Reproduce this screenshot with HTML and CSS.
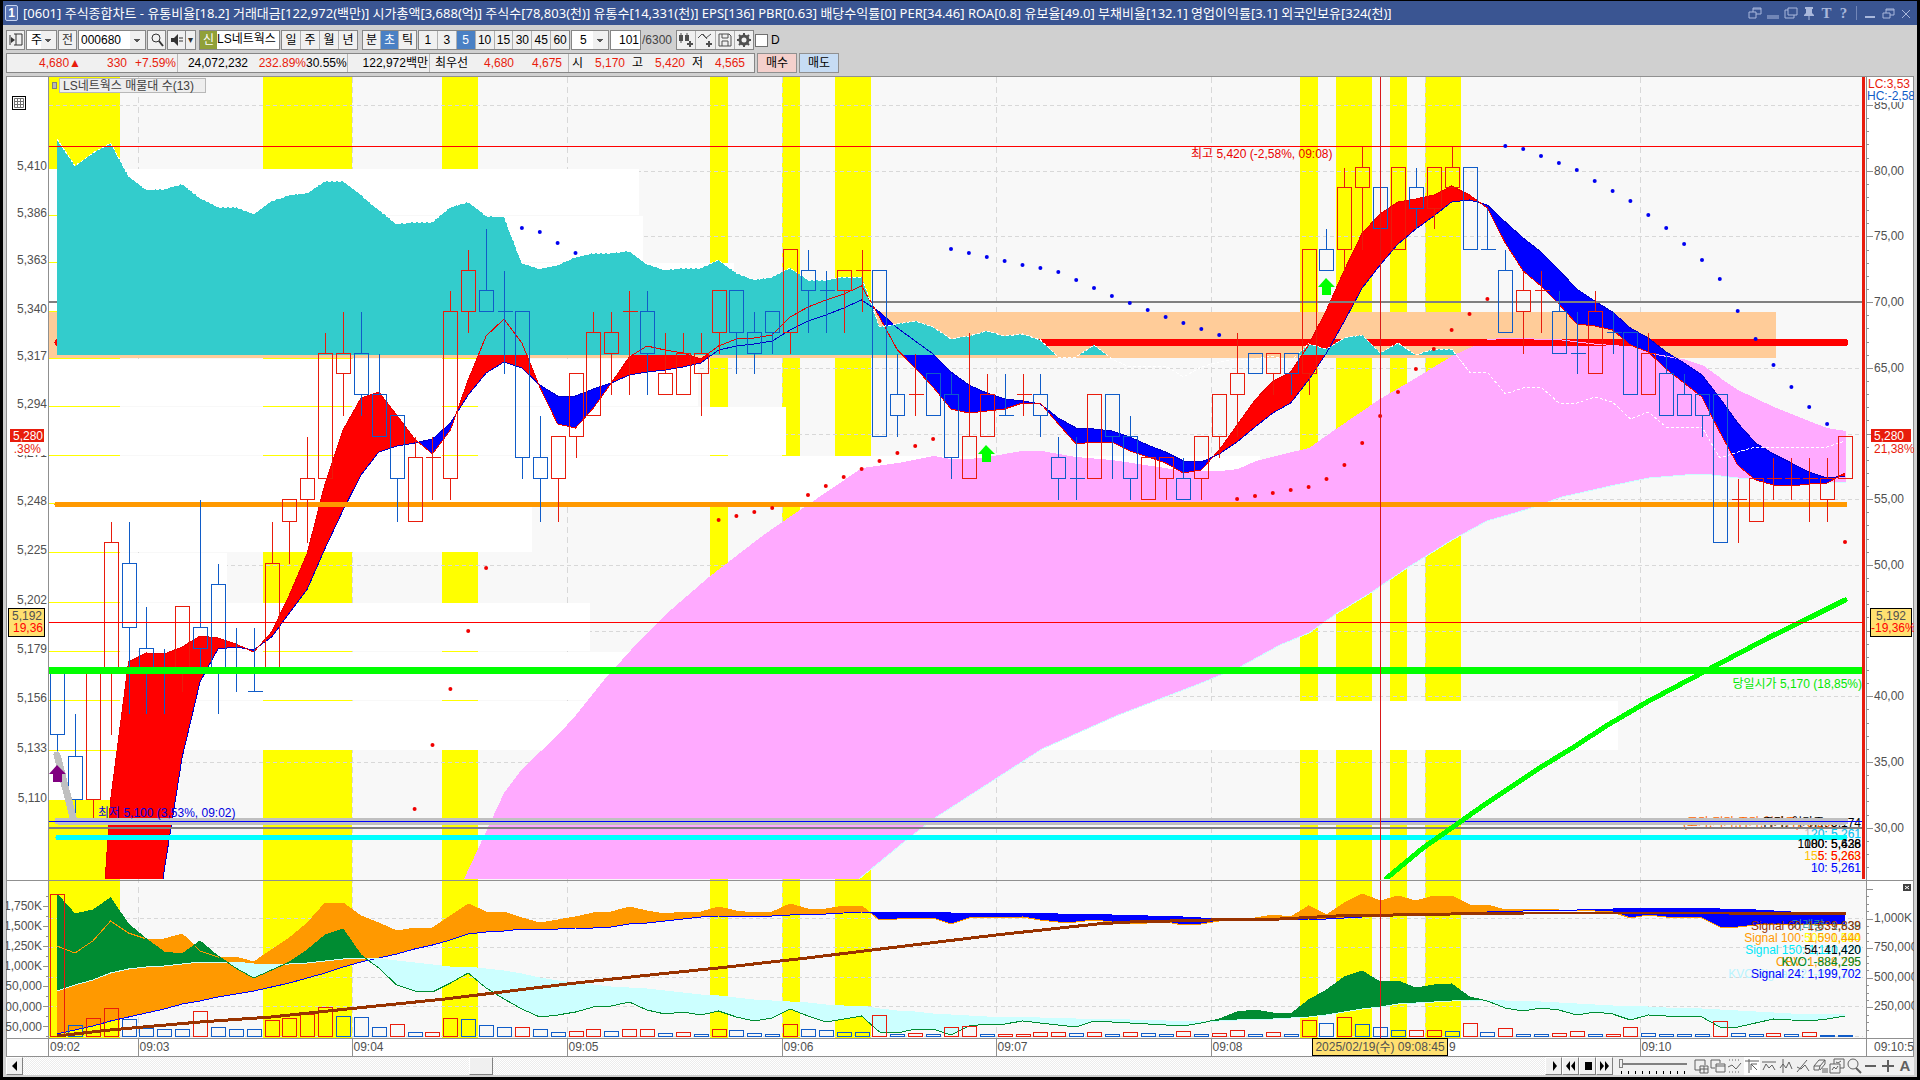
FILE: index.html
```html
<!DOCTYPE html>
<html lang="ko">
<head>
  <meta charset="UTF-8">
  <meta name="viewport" content="width=device-width, initial-scale=1.0">
  <title>[0601] 주식종합차트</title>
  <link rel="stylesheet" href="styles.css">
</head>
<body>

  <!-- Title bar -->
  <header class="titlebar">
    <span class="badge">1</span>
    <h1>[0601] 주식종합차트 - 유통비율[18.2] 거래대금[122,972(백만)] 시가총액[3,688(억)] 주식수[78,803(천)] 유통수[14,331(천)] EPS[136] PBR[0.63] 배당수익률[0] PER[34.46] ROA[0.8] 유보율[49.0] 부채비율[132.1] 영업이익률[3.1] 외국인보유[324(천)]</h1>
    <div class="win-buttons">
      <button aria-label="링크"><svg viewBox="0 0 16 16"><path d="M2 7h7v6H2zM6 7V3h8v6H9M6 4h8"/></svg></button>
      <button aria-label="내리기"><svg viewBox="0 0 16 16"><path d="M2 11h12M2 13h12"/></svg></button>
      <button aria-label="복사"><svg viewBox="0 0 16 16"><path d="M5 3h9v7H5zM5 5H2v8h9v-3"/></svg></button>
      <button aria-label="고정"><svg viewBox="0 0 16 16"><path class="solid" d="M4 2h8v2h-1v4l2 2v1H3v-1l2-2V4H4z"/><path d="M8 11v4"/></svg></button>
      <button class="t">T</button>
      <button class="t">?</button>
      <i class="split"></i>
      <button aria-label="최소화"><svg viewBox="0 0 16 16"><path d="M3 12h10" stroke-width="2"/></svg></button>
      <button aria-label="이전 크기"><svg viewBox="0 0 16 16"><path d="M3 8h7v5H3zM6 8V4h8v6h-4M6 5h8"/></svg></button>
      <button aria-label="닫기"><svg viewBox="0 0 16 16"><path d="M4 5l8 8M12 5l-8 8"/></svg></button>
    </div>
  </header>

  <div class="window">

    <!-- Toolbar -->
    <div class="toolbar">
      <button class="cell" aria-label="패널 열기"><svg viewBox="0 0 16 16"><path d="M6 2h8v11H6M8 2v11M2 3v10"/><path class="solid" d="M7 8L3 5v6z"/></svg></button>
      <select class="kind" aria-label="종목 구분"><option>주</option></select>
      <button class="cell">전</button>
      <select class="code" aria-label="종목코드"><option>000680</option></select>
      <button class="cell" aria-label="검색"><svg viewBox="0 0 16 16"><circle cx="7" cy="6" r="4"/><path d="M10 9l4 5" stroke-width="2"/></svg></button>
      <button class="cell" aria-label="소리"><svg viewBox="0 0 16 16"><path class="solid" d="M2 6h3l4-4v12L5 10H2z"/><path d="M11 5v6M13 5v6" stroke-dasharray="2 1"/></svg></button>
      <button class="cell drop" aria-label="소리 메뉴">▾</button>
      <span class="name"><b>신</b><span>LS네트웍스</span></span>
      <span class="group period"><button>일</button><button>주</button><button>월</button><button>년</button></span>
      <span class="group intraday"><button>분</button><button class="on">초</button><button>틱</button></span>
      <span class="group interval"><button>1</button><button>3</button><button class="on">5</button><button>10</button><button>15</button><button>30</button><button>45</button><button>60</button></span>
      <select class="unit" aria-label="주기"><option>5</option></select>
      <input class="count" type="text" value="101" aria-label="봉 개수">
      <span class="total">/6300</span>
      <span class="group icons">
        <button aria-label="지표 추가"><svg viewBox="0 0 16 16"><path class="solid" d="M1 3h4v6H1zM7 3h4v6H7z"/><path d="M3 1v10M9 1v8"/><path d="M9 12h6M12 9v6" stroke-width="2"/></svg></button>
        <button aria-label="비교 추가"><svg viewBox="0 0 16 16"><path d="M1 6l4-4 4 4 5-4M6 2l4 5"/><path d="M9 12h6M12 9v6" stroke-width="2"/></svg></button>
        <button aria-label="저장"><svg viewBox="0 0 16 16"><path d="M2 2h10l2 2v10H2zM5 2v4h6V2M5 14V9h6v5"/></svg></button>
        <button aria-label="설정"><svg viewBox="0 0 16 16"><circle cx="8" cy="8" r="4" stroke-width="3"/><path d="M8 1v3M8 12v3M1 8h3M12 8h3M3 3l2 2M11 11l2 2M13 3l-2 2M5 11l-2 2" stroke-width="2"/></svg></button>
      </span>
      <label class="check"><input type="checkbox">D</label>
    </div>

    <!-- Quote row -->
    <div class="quote-row">
      <div class="quote">
        <span class="up w74">4,680▲</span><span class="up w46">330</span><span class="up w50 line">+7.59%</span>
        <span class="w70">24,072,232</span><span class="up w58">232.89%</span><span class="w42 line">30.55%</span>
        <span class="w82 line">122,972백만</span><span class="w38">최우선</span><span class="up w46">4,680</span><span class="up w55 line2">4,675</span>
        <span class="w14">시</span><span class="up w42">5,170</span><span class="w18">고</span><span class="up w42">5,420</span><span class="w18">저</span><span class="up w42">4,565</span>
      </div>
      <button class="buy">매수</button>
      <button class="sell">매도</button>
    </div>

    <!-- Chart -->
    <main class="chart">
      <svg id="chart" viewBox="6 76 1908 981" preserveAspectRatio="none" role="img" aria-label="LS네트웍스 5초봉 차트"></svg>
    </main>

    <!-- Scroll and playback -->
    <footer class="bottombar">
      <div class="scroll">
        <button aria-label="왼쪽"><svg viewBox="0 0 16 16"><path class="solid" d="M10 3v10L5 8z"/></svg></button>
        <i class="thumb"></i>
      </div>
      <div class="play">
        <button aria-label="재생"><svg viewBox="0 0 16 16"><path class="solid" d="M7 3v10l4-5z"/></svg></button>
        <button aria-label="뒤로"><svg viewBox="0 0 16 16"><path class="solid" d="M7 3v10L3 8zM12 3v10L8 8z"/></svg></button>
        <button aria-label="정지"><svg viewBox="0 0 16 16"><path class="solid" d="M5 4h7v8H5z"/></svg></button>
        <button aria-label="앞으로"><svg viewBox="0 0 16 16"><path class="solid" d="M3 3v10l4-5zM8 3v10l4-5z"/></svg></button>
      </div>
      <div class="slider"><input type="range" min="0" max="10" value="0" aria-label="재생 속도"></div>
      <div class="tools">
        <button aria-label="창 추가"><svg viewBox="0 0 16 16"><path d="M8 12H2V2h10v5M7 8h8v7H7zM11 8v7M7 11h8"/></svg></button>
        <button aria-label="창 겹치기"><svg viewBox="0 0 16 16"><path d="M5 10H1V2h9v3M6 6h9v8H6zM6 8h9"/></svg></button>
        <button aria-label="구간"><svg viewBox="0 0 16 16"><path d="M2 2h12M2 14h12" stroke-dasharray="1 2"/><path d="M1 9l4-2 4 4 5-6"/></svg></button>
        <button class="on" aria-label="십자선"><svg viewBox="0 0 16 16"><path d="M1 3h14M5 1v14M7 6h6M7 6l6 6M7 6v6"/></svg></button>
        <button aria-label="수평선"><svg viewBox="0 0 16 16"><path d="M1 4h14M2 12l3-6 3 4 3-3 3 5"/></svg></button>
        <button aria-label="수직선"><svg viewBox="0 0 16 16"><path d="M5 1v14M2 10l3-4 3 4 3-6 3 7"/></svg></button>
        <button aria-label="추세선"><svg viewBox="0 0 16 16"><path d="M2 14L12 2M2 9l4 2 4-4 4 6"/></svg></button>
        <button aria-label="모두 지우기"><svg viewBox="0 0 16 16"><path d="M2 8l5-6h6l-5 6zM2 8v4h5l1-4M8 12l5-6V2M11 10v5M13 10v5M15 10v5"/></svg></button>
        <button aria-label="차트 겹치기"><svg viewBox="0 0 16 16"><path d="M5 6V1h10v9h-4M1 6h10v9H1zM3 12l2-3 2 2 2-3M7 4l2 1 3-2"/></svg></button>
        <button aria-label="돋보기"><svg viewBox="0 0 16 16"><circle cx="7" cy="6" r="5"/><path d="M10 10l5 5" stroke-width="2"/></svg></button>
        <button aria-label="축소"><svg viewBox="0 0 16 16"><path d="M2 8h11" stroke-width="2"/></svg></button>
        <button aria-label="확대"><svg viewBox="0 0 16 16"><path d="M2 8h12M8 2v12" stroke-width="2"/></svg></button>
        <button class="a">A</button>
      </div>
    </footer>
  </div>

  <script src="chart.js"></script>
</body>
</html>
```

FILE: styles.css
```css
* {
  box-sizing: border-box;
}

body {
  margin: 0;
  height: 100vh;
  padding: 1px 3px 3px;
  background: #000;
  display: flex;
  flex-direction: column;
  font-family: "Liberation Sans", "Noto Sans CJK KR", sans-serif;
  font-size: 12px;
  line-height: 16px;
  color: #000;
}

button, input, select {
  font: inherit;
  color: inherit;
  margin: 0;
  padding: 0;
  border: 0;
  border-radius: 0;
}

button {
  display: flex;
  align-items: center;
  justify-content: center;
  background: none;
}

svg {
  display: block;
}

button svg {
  width: 16px;
  height: 16px;
  flex: none;
  fill: none;
  stroke: currentColor;
}

.solid {
  fill: currentColor;
  stroke: none;
}

/* Title bar */
.titlebar {
  height: 24px;
  flex: none;
  display: flex;
  align-items: center;
  background: #3a5592;
  color: #fff;
  padding: 0 3px 0 2px;
}

.badge {
  width: 13px;
  height: 16px;
  margin-right: 5px;
  border: 1px solid #c8d4f0;
  border-radius: 2px;
  background: #5873b4;
  font-weight: bold;
  line-height: 14px;
  text-align: center;
}

.titlebar h1 {
  flex: 1;
  min-width: 0;
  margin: 0;
  font-size: 13px;
  font-weight: normal;
  font-family: "Noto Sans", "Noto Sans CJK KR", sans-serif;
  line-height: 20px;
  white-space: nowrap;
}

.win-buttons {
  display: flex;
  align-items: center;
  gap: 2px;
  color: #a9b8dc;
}

.win-buttons .t {
  width: 15px;
  font: bold 15px "Liberation Serif", serif;
}

.win-buttons .split {
  width: 1px;
  height: 14px;
  margin: 0 3px;
  background: #7387b8;
}

/* Window */
.window {
  flex: 1;
  min-height: 0;
  display: flex;
  flex-direction: column;
  padding: 5px 3px 2px;
  background: #d0d0d0;
}

.toolbar, .quote-row {
  display: flex;
  align-items: center;
  flex: none;
}

.toolbar {
  gap: 1px;
}

.cell, .group, .toolbar select, .count, .name {
  height: 20px;
  flex: none;
  border: 1px solid #868686;
  background: #f0f0f0;
}

.cell {
  width: 19px;
  color: #333;
}

.cell.drop {
  width: 11px;
  margin-left: -2px;
  margin-right: 2px;
  font-size: 10px;
}

.toolbar select {
  appearance: none;
  padding-left: 4px;
  background: linear-gradient(#555, #555) no-repeat right 5px top 8px / 6px 1px,
    linear-gradient(#555, #555) no-repeat right 6px top 9px / 4px 1px,
    linear-gradient(#555, #555) no-repeat right 7px top 10px / 2px 1px,
    linear-gradient(90deg, #fff, #fff) no-repeat left / calc(100% - 15px) 100%,
    #f0f0f0;
}

.toolbar .kind {
  width: 31px;
}

.toolbar .code {
  width: 68px;
  padding-left: 2px;
}

.name {
  width: 81px;
  display: flex;
  background: #fff;
  white-space: nowrap;
}

.name b {
  width: 17px;
  background: #90a038;
  color: #fff;
  font-weight: normal;
  line-height: 18px;
  text-align: center;
}

.group {
  display: flex;
}

.group button {
  flex: 1;
  border-left: 1px solid #b0b0b0;
}

.group button:first-child {
  border-left: 0;
}

.group .on {
  background: #4a80c4;
  color: #fff;
}

.period {
  width: 77px;
  margin-right: 3px;
}

.intraday {
  width: 55px;
}

.interval {
  width: 152px;
}

.icons {
  width: 78px;
  color: #505050;
}

.toolbar .unit {
  width: 38px;
  padding-left: 8px;
}

.toolbar .count {
  width: 31px;
  padding-right: 1px;
  background: #fff;
  text-align: right;
}

.total {
  width: 33px;
  color: #444;
}

.check {
  display: flex;
  align-items: center;
  gap: 3px;
}

.check input {
  appearance: none;
  width: 13px;
  height: 13px;
  border: 1px solid #707070;
  background: #fff;
}

/* Quote row */
.quote-row {
  margin-top: 3px;
  gap: 2px;
}

.quote {
  display: flex;
  align-items: center;
  height: 20px;
  padding-right: 9px;
  border: 1px solid #868686;
  background: #f0f0f0;
}

.quote span {
  height: 18px;
  line-height: 18px;
  text-align: right;
  white-space: nowrap;
}

.quote .up {
  color: #e81c0c;
}

.quote .line, .quote .line2 {
  border-right: 1px solid #b8b8b8;
  padding-right: 1px;
}

.quote .line2 {
  padding-right: 6px;
}

.w14 { width: 14px; }
.w18 { width: 18px; }
.w38 { width: 38px; }
.w42 { width: 42px; }
.w46 { width: 46px; }
.w50 { width: 51px; }
.w55 { width: 55px; }
.w58 { width: 58px; }
.w70 { width: 70px; }
.w74 { width: 74px; }
.w82 { width: 82px; }

.buy, .sell {
  width: 40px;
  height: 20px;
  border: 1px solid #909090;
  background: #f4d0cc;
}

.sell {
  background: #c6dcf4;
}

/* Chart */
.chart {
  flex: 1;
  min-height: 0;
  margin-top: 3px;
}

.chart svg {
  width: 100%;
  height: 100%;
  background: #fff;
}

.chart text {
  font-size: 12px;
}

/* Bottom bar */
.bottombar {
  height: 18px;
  flex: none;
  display: flex;
  background: #f0f0f0;
}

.scroll {
  flex: 1;
  display: flex;
  background: repeating-conic-gradient(#fff 0 25%, #ececec 0 50%) 0 0 / 2px 2px;
}

.scroll button, .thumb, .play button {
  width: 17px;
  background: #f0f0f0;
  border: 1px solid;
  border-color: #fff #808080 #808080 #fff;
}

.thumb {
  width: 24px;
  margin-left: 29%;
}

.play {
  display: flex;
}

.slider {
  width: 80px;
  padding: 2px 6px 0;
  background: repeating-linear-gradient(90deg, #000 0 1px, transparent 1px 7px) no-repeat 8px 14px / 66px 3px;
}

.slider input {
  display: block;
  appearance: none;
  width: 100%;
  height: 9px;
  background: linear-gradient(#808080, #808080) no-repeat center / 100% 2px;
}

.slider input::-webkit-slider-thumb {
  appearance: none;
  width: 4px;
  height: 9px;
  border: 1px solid #808080;
  background: #f0f0f0;
}

.tools {
  display: flex;
  gap: 1px;
  padding-right: 1px;
  color: #606060;
}

.tools button {
  width: 16px;
}

.tools .on {
  background: #fff;
}

.tools .a {
  font-size: 15px;
  font-weight: bold;
}
```

FILE: chart.js
```js
var svg = document.getElementById('chart');
var out = [];

var RED = '#ff0000', BLUE = '#0000ff', UP = '#e81c0c', DOWN = '#105cc8';
var LEFT = 49, RIGHT = 1863, LAST = 1845;

// bar index -> x, price -> y (log scale)
function bx(i) { return 57 + i * 17.88; }
function py(p) { return Math.round(821 - 11091 * Math.log(p / 5100)) + 0.5; }

function rect(x, y, w, h, fill, extra) {
  out.push('<rect x="' + x + '" y="' + y + '" width="' + w + '" height="' + h + '" fill="' + fill + '" ' + (extra || '') + '/>');
}
function line(x1, y1, x2, y2, color, w, extra) {
  out.push('<path d="M' + x1 + ' ' + y1 + 'L' + x2 + ' ' + y2 + '" stroke="' + color + '" stroke-width="' + (w || 1) + '" fill="none" ' + (extra || '') + '/>');
}
function poly(pts, color, w, extra) {
  out.push('<polyline points="' + pts.join(' ') + '" stroke="' + color + '" stroke-width="' + w + '" fill="none" ' + (extra || '') + '/>');
}
function area(pts, fill, extra) {
  out.push('<polygon points="' + pts.join(' ') + '" fill="' + fill + '" ' + (extra || '') + '/>');
}
function text(x, y, s, color, anchor, extra) {
  out.push('<text x="' + x + '" y="' + y + '" fill="' + color + '" text-anchor="' + (anchor || 'start') + '" ' + (extra || '') + '>' + s + '</text>');
}
function series(ys) {
  return ys.map(function (y, i) { return bx(i).toFixed(1) + ',' + y; });
}

// fill between two series, one colour when a is above b and another when below
function band(a, b, from, to, above, below) {
  var d = { up: '', down: '' };
  for (var i = from; i < to; i++) {
    var x0 = bx(i), x1 = bx(i + 1), d0 = b[i] - a[i], d1 = b[i + 1] - a[i + 1];
    if (d0 * d1 < 0) {
      var t = d0 / (d0 - d1), xm = x0 + (x1 - x0) * t, ym = a[i] + (a[i + 1] - a[i]) * t;
      d[d0 > 0 ? 'up' : 'down'] += 'M' + x0 + ' ' + a[i] + 'L' + xm + ' ' + ym + 'L' + x0 + ' ' + b[i] + 'Z';
      d[d1 > 0 ? 'up' : 'down'] += 'M' + x1 + ' ' + a[i + 1] + 'L' + xm + ' ' + ym + 'L' + x1 + ' ' + b[i + 1] + 'Z';
    } else {
      d[d0 + d1 > 0 ? 'up' : 'down'] += 'M' + x0 + ' ' + a[i] + 'L' + x1 + ' ' + a[i + 1] + 'L' + x1 + ' ' + b[i + 1] + 'L' + x0 + ' ' + b[i] + 'Z';
    }
  }
  out.push('<path d="' + d.up + '" fill="' + above + '"/><path d="' + d.down + '" fill="' + below + '"/>');
}

// colour, body top, body bottom, high, low (all / 10)
var candles = 'b517 514 517 513,b513 511 515 510,r517 511 517 510,r523 517 524 514,b522 519 524 515,b518 517 520 515,b517 517 518 515,r520 517 520 516,b519 518 525 517,b521 517 522 515,' +
  'b517 517 519 516,b516 516 519 516,r522 517 524 517,r525 524 525 522,r526 525 528 523,r532 526 533 526,r532 531 534 529,b532 530 534 529,b530 528 532 528,b529 526 529 524,' +
  'r527 524 528 524,r527 527 528 525,r534 526 535 525,r536 534 537 533,b535 534 538 534,b534 534 536 531,b534 527 534 526,b527 526 529 524,r528 526 528 524,r531 528 531 527,' +
  'r533 529 534 529,r533 532 534 530,r534 534 535 530,b534 532 535 530,r531 530 533 530,r532 530 533 530,r532 531 533 529,r535 533 535 532,b535 533 535 531,b533 532 534 531,' +
  'b534 533 534 532,r537 533 537 532,b536 535 537 533,b535 535 536 533,r536 535 536 533,r536 536 537 534,b536 528 536 528,b530 529 532 528,r530 530 532 529,b531 529 531 529,' +
  'b530 527 531 526,r528 526 533 526,r530 528 531 528,b529 529 531 529,r530 530 531 529,b530 529 531 528,b527 526 528 525,b526 526 528 525,r530 526 530 526,b530 528 530 526,' +
  'b528 526 529 525,r527 525 527 525,r527 526 527 525,b526 525 527 525,r528 526 528 525,r530 528 530 527,r531 530 533 528,b532 531 532 531,r532 531 532 530,b532 531 532 530,' +
  'r537 531 537 530,b537 536 538 536,r540 537 541 536,r541 540 542 537,b540 538 540 538,r541 537 541 537,b540 539 541 538,r541 539 541 538,r541 540 542 540,b541 537 541 537,' +
  'b537 537 539 537,b536 533 537 533,r535 534 536 532,r535 535 536 533,b534 532 535 532,b532 532 534 531,r534 531 535 531,b533 533 534 532,b533 530 533 530,r532 530 533 530,' +
  'b531 529 532 529,b530 529 531 529,b530 529 530 528,b530 523 530 523,r525 525 526 523,r526 524 526 524,r526 526 527 525,r526 526 527 525,r526 526 527 524,r526 525 527 524,r528 526 528 526';

var fast = [1500, 1300, 1060, 800, 662, 653, 654, 647, 636, 638, 644, 652, 632, 595, 553, 483, 430, 398, 392, 415,
  439, 454, 430, 380, 336, 319, 343, 387, 424, 428, 408, 383, 357, 346, 350, 353, 359, 346, 339, 338,
  335, 317, 307, 300, 294, 286, 317, 350, 368, 387, 409, 413, 411, 409, 403, 403, 424, 444, 442, 442,
  451, 457, 463, 473, 470, 450, 425, 400, 381, 372, 345, 310, 270, 233, 214, 202, 199, 195, 186, 195,
  208, 243, 271, 286, 304, 324, 326, 330, 345, 352, 369, 383, 397, 432, 465, 480, 485, 486, 484, 483, 473];
var slow = [2200, 2000, 1800, 1500, 1200, 1000, 870, 757, 682, 649, 647, 650, 637, 613, 589, 548, 510, 475, 452, 446,
  443, 439, 423, 395, 373, 362, 368, 385, 396, 396, 389, 383, 375, 372, 370, 367, 363, 350, 346, 344,
  341, 330, 321, 315, 308, 300, 312, 328, 341, 354, 372, 385, 393, 399, 401, 404, 418, 428, 429, 431,
  437, 445, 452, 461, 462, 454, 442, 427, 413, 403, 380, 353, 321, 288, 265, 244, 229, 216, 202, 200,
  205, 222, 238, 252, 270, 289, 301, 312, 328, 338, 352, 363, 375, 398, 423, 443, 454, 463, 472, 478, 476];
var teal = [139, 166, 153, 143, 176, 190, 189, 184, 198, 207, 207, 214, 201, 195, 193, 181, 181, 195, 210, 224,
  222, 222, 207, 202, 216, 217, 263, 269, 265, 257, 253, 253, 251, 264, 270, 268, 268, 260, 273, 280,
  277, 268, 280, 280, 277, 277, 327, 324, 321, 327, 339, 336, 331, 336, 334, 340, 357, 357, 345, 359,
  367, 366, 366, 377, 367, 362, 359, 359, 356, 361, 344, 349, 338, 335, 353, 343, 355, 349, 349, 372,
  372, 394, 388, 387, 403, 403, 397, 402, 419, 412, 427, 427, 427, 458, 452, 447, 447, 447, 447, 447, 441];

// lower panel
var green = [894, 914, 910, 898, 924, 939, 952, 954, 941, 956, 968, 978, 970, 962, 950, 935, 929, 955, 968, 985,
  991, 992, 983, 973, 988, 999, 1009, 1017, 1015, 1012, 1007, 1006, 1002, 1010, 1014, 1012, 1015, 1011, 1017, 1021,
  1018, 1009, 1016, 1022, 1019, 1016, 1032, 1033, 1029, 1029, 1035, 1026, 1024, 1024, 1021, 1023, 1025, 1027, 1021, 1022,
  1023, 1024, 1025, 1026, 1023, 1019, 1012, 1010, 1013, 1014, 1000, 990, 977, 971, 982, 981, 988, 985, 984, 997,
  1001, 1008, 1011, 1008, 1010, 1015, 1012, 1014, 1020, 1015, 1016, 1016, 1017, 1027, 1027, 1023, 1019, 1020, 1021, 1019, 1016];
var pale = [991, 985, 980, 973, 969, 967, 966, 964, 962, 962, 962, 964, 964, 964, 963, 961, 959, 958, 959, 961,
  963, 965, 967, 967, 969, 971, 974, 978, 981, 983, 985, 987, 988, 989, 991, 993, 995, 996, 998, 1000,
  1001, 1002, 1003, 1005, 1006, 1006, 1009, 1011, 1012, 1014, 1015, 1016, 1017, 1017, 1017, 1018, 1018, 1019, 1019, 1019,
  1020, 1020, 1021, 1021, 1022, 1021, 1020, 1019, 1019, 1018, 1017, 1015, 1012, 1009, 1007, 1004, 1003, 1002, 1001, 1000,
  1000, 1001, 1001, 1002, 1003, 1004, 1005, 1006, 1006, 1007, 1008, 1008, 1009, 1010, 1011, 1012, 1013, 1014, 1014, 1014, 1015];
var orange = [946, 953, 941, 921, 933, 939, 939, 934, 951, 957, 957, 962, 950, 938, 923, 903, 903, 916, 923, 931,
  928, 928, 916, 904, 912, 912, 918, 923, 920, 917, 913, 912, 907, 911, 914, 912, 912, 907, 911, 913,
  912, 904, 909, 909, 906, 906, 920, 919, 918, 918, 924, 918, 917, 918, 917, 920, 922, 922, 920, 922,
  924, 923, 922, 925, 924, 921, 920, 918, 915, 917, 906, 915, 903, 894, 901, 896, 901, 896, 896, 905,
  905, 910, 909, 909, 910, 910, 911, 912, 918, 915, 917, 917, 918, 927, 927, 925, 924, 924, 924, 924, 924];
var navy = [1034, 1030, 1026, 1021, 1017, 1013, 1009, 1004, 1001, 997, 994, 991, 987, 983, 978, 973, 967, 962, 958, 954,
  949, 945, 940, 934, 932, 931, 929, 929, 929, 928, 928, 927, 924, 923, 921, 919, 917, 916, 916, 916,
  916, 915, 914, 914, 913, 912, 912, 912, 912, 912, 913, 913, 913, 913, 913, 913, 914, 914, 914, 915,
  915, 916, 916, 917, 918, 918, 919, 919, 919, 920, 919, 919, 918, 917, 916, 915, 915, 914, 913, 912,
  912, 911, 911, 910, 910, 910, 909, 909, 908, 908, 908, 908, 908, 909, 909, 910, 911, 912, 913, 914, 915];

// volume bar heights, negative = down bar
var volume = [142, -11, 18, 28, -17, -8, -7, -7, 25, -9, -7, -7, 16, 18, 22, 29, -20, -19, -9, 12,
  -4, 4, 18, -17, -11, -9, 9, -7, -4, 5, 7, -5, 7, 7, -3, 4, -2, 7, -6, -3,
  -2, 12, -7, -6, -4, -4, 21, -2, 3, -2, 9, 10, -2, 2, 2, 4, 4, -3, 4, -2,
  4, -3, -2, 5, -2, 3, 6, -2, 4, -2, 16, -13, 19, -12, -9, -6, 6, 6, -5, 13,
  -4, 8, -2, -2, 3, 5, -2, 2, 9, -3, -2, -2, -2, 15, -3, -2, 3, -2, 4, -1, -1];

out.push('<defs><clipPath id="main"><rect x="49" y="77" width="1865" height="802"/></clipPath>' +
  '<clipPath id="cloud"><rect x="49" y="77" width="1815" height="278"/></clipPath></defs>');
out.push('<g shape-rendering="crispEdges">');

// background and session highlights
rect(LEFT, 77, 1817, 961, '#f8f8f8');
[[49, 71], [263, 89], [442, 36], [710, 18], [782, 18], [835, 36], [1300, 18], [1336, 36], [1390, 17], [1425, 36]].forEach(function (b) {
  rect(b[0], 77, b[1], 961, '#ffff00');
});

// grid
var minutes = [138.5, 352.5, 567.5, 782.5, 996.5, 1211.5, 1425.5, 1640.5];
minutes.forEach(function (x) { line(x, 77, x, 1038, '#d8d8d8', 1, 'stroke-dasharray="6 4"'); });
for (var g = 0; g < 12; g++) {
  var gy = Math.round(105 + g * 65.7) + 0.5;
  line(LEFT, gy, RIGHT, gy, '#d8d8d8', 1, 'stroke-dasharray="4 3"');
}
[918.5, 947.5, 977.5, 1006.5, 1036.5].forEach(function (y) { line(LEFT, y, RIGHT, y, '#d8d8d8', 1, 'stroke-dasharray="4 3"'); });

// volume profile
var levels = [169, 216, 263, 312, 359, 407, 456, 504, 553, 603, 652, 701, 751, 801];
[639, 643, 734, 1776, 698, 786, 1260, 532, 227, 590, 1100, 1618, 180].forEach(function (x, i) {
  rect(LEFT, levels[i], x - LEFT, levels[i + 1] - levels[i] - 1, i === 3 ? '#ffcc99' : '#ffffff');
});

out.push('<g clip-path="url(#main)">');
line(LEFT, 302, RIGHT, 302, '#808080', 2);

// pink cloud
var top1 = ['464,879', '504,793', '522,769', '559,734', '576,715', '604,680', '640,640', '665,615', '709,577', '757,540', '772,529', '862,468', '898,463', '934,456', '951,459', '969,459', '987,457', '1022,451', '1042,451', '1076,457', '1112,460', '1165,468', '1183,471', '1220,471', '1238,469', '1256,461', '1280,455', '1309,448', '1336,429', '1380,399', '1416,378', '1452,356', '1487,340', '1505,338', '1562,340', '1594,344', '1631,347', '1649,353', '1685,360', '1703,366', '1720,378', '1738,390', '1774,407', '1809,421', '1827,428', '1846,431'];
var low1 = ['1846,483', '1827,482', '1738,478', '1703,474', '1685,475', '1649,478', '1615,485', '1562,497', '1525,510', '1487,521', '1452,540', '1420,560', '1407,568', '1372,592', '1336,614', '1309,633', '1280,645', '1240,667', '1204,682', '1116,716', '1042,749', '997,778', '935,818', '909,838', '859,879'];
area(top1.concat(low1), '#ffaaff');
poly(low1, '#ccffff', 1);

// band between the averages
band(fast, slow, 2, 100, RED, BLUE);
line(58, 342.5, LAST, 342.5, RED, 7, 'stroke-linecap="round"');
band(fast, slow, 86, 90, RED, BLUE);
area(series(teal).concat([LAST + ',355', '57,355']), '#33cccc', 'clip-path="url(#cloud)"');
poly(top1.slice(32, 41), '#ffaaff', 1);
poly(series(slow), '#0000c8', 1);
poly(series(fast), '#e80000', 1);
poly(series(teal), '#ffffff', 1, 'stroke-dasharray="3 2"');

// level lines
line(LEFT, 146.5, RIGHT, 146.5, RED, 1);
line(1300, 302, RIGHT, 302, '#808080', 2);
line(57, 504.5, LAST, 504.5, '#ff9900', 5, 'stroke-linecap="round"');

// candles
candles.split(',').forEach(function (c, i) {
  var color = c[0] === 'r' ? UP : DOWN;
  var v = c.slice(1).split(' ').map(function (n) { return py(n * 10); });
  var x = Math.round(bx(i)) + 0.5;
  if (v[2] < v[0]) line(x, v[2], x, v[0], color);
  if (v[3] > v[1]) line(x, v[1], x, v[3], color);
  if (v[0] === v[1]) line(x - 7, v[0], x + 8, v[0], color);
  else rect(x - 7, v[0], 14, v[1] - v[0], 'none', 'stroke="' + color + '"');
});

poly(['57,755', '74,821', LAST + ',821'], '#c0c0c0', 7, 'stroke-linecap="round" stroke-linejoin="round"');
line(LEFT, 670.5, RIGHT, 670.5, '#00ff00', 7);
text(1683, 827, '(고가,저가,종가,역가중): 5,263', '#ff6600');
text(1861, 827, '종가, 역가중: 5,174', '#000', 'end');
line(58, 821, LAST, 821, '#c0c0c0', 7, 'stroke-linecap="round"');
line(LEFT, 821.5, RIGHT, 821.5, BLUE, 1);
line(LEFT, 828, RIGHT, 828, '#808080', 2);
text(1861, 838, '120: 5,261', '#c0c0c0', 'end');
text(1861, 838, '20: 5,261', '#00ccff', 'end');
line(58, 837.5, LAST, 837.5, '#00ffff', 5, 'stroke-linecap="round"');
poly(['1387,878', '1423,848', '1460,822', '1484,805', '1541,767', '1574,747', '1606,726', '1647,702', '1698,675', '1713,667', '1770,637', '1811,617', '1845,600'], '#00ff00', 5, 'stroke-linecap="round"');
rect(RIGHT - 1, 77, 3, 802, UP);
out.push('</g></g>');

// parabolic dots
function dots(start, ys, color) {
  ys.forEach(function (y, i) { if (y) out.push('<circle cx="' + bx(start + i).toFixed(1) + '" cy="' + y + '" r="2" fill="' + color + '"/>'); });
}
dots(26, [228, 232, 243, 253], '#0000f0');
dots(50, [249, 253, 257, 261, 265, 268, 272, 280, 288, 296, 303, 310, 317, 323, 329, 335], '#0000f0');
dots(81, [146, 149, 156, 163, 170, 181, 191, 201, 215, 228, 244, 260, 279, 311, 339, 365, 387, 407, 424], '#0000f0');
dots(20, [809, 745, 689, 631, 568], '#f00000');
dots(37, [520, 516, 512, 508, 0, 495, 486, 477, 469, 461, 453, 446, 439], '#f00000');
dots(66, [499, 496, 493, 490, 487, 479, 465, 443, 416, 392, 369, 349, 330, 314, 299], '#f00000');
dots(100, [542], '#f00000');

// signal arrows
[[986, 445, '#00ff00'], [1326, 278, '#00ff00'], [57, 765, '#800080']].forEach(function (a) {
  out.push('<path transform="translate(' + a[0] + ' ' + a[1] + ')" d="M0 0L9 9H5V17H-4V9H-8Z" fill="' + a[2] + '"/>');
});

// lower panel
out.push('<g shape-rendering="crispEdges">');
band(orange, navy, 0, 100, '#ff9900', BLUE);
band(green, pale, 0, 100, '#008c32', '#ccffff');
poly(series(orange), '#ff9900', 1);
poly(series(navy), BLUE, 1);
poly(series(pale), '#ccffff', 1);
poly(series(green), '#008c32', 1);
volume.forEach(function (v, i) {
  rect(Math.round(bx(i)) - 6.5, 1036.5 - Math.abs(v), 14, Math.abs(v), 'none', 'stroke="' + (v > 0 ? UP : DOWN) + '"');
});
poly(['57,1036', '110,1030', '143,1027', '200,1022', '271,1017', '347,1009', '445,999', '567,984', '640,976', '718,968', '807,958', '905,946', '996,935', '1097,924', '1130,922', '1211,920', '1280,919', '1336,916', '1451,914', '1525,913', '1729,913', '1846,914'], '#993300', 3);

// crosshair
line(1380.5, 77, 1380.5, 1038, '#d81818', 1);
line(LEFT, 622.5, RIGHT, 622.5, RED, 1);

// frame and axes
out.push('<path d="M6.5 76.5H1913.5V1056.5H6.5ZM48.5 77V1056M1866.5 77V1056M7 880.5H1913M7 1038.5H1913" stroke="#909090" fill="none"/>');
minutes.forEach(function (x) { line(x, 1039, x, 1056, '#909090'); });
for (var k = 0; k < 60; k++) {
  var ty = Math.round(105 + k * 13.14) + 0.5;
  if (ty < 879) line(1867, ty, k % 5 ? 1869 : 1873, ty, '#909090');
}
for (k = 0; k < 15; k++) {
  line(k % 2 ? 43 : 46, 896.5 + k * 10, 48, 896.5 + k * 10, '#909090');
}
for (k = 0; k < 20; k++) {
  line(1867, 889.5 + k * 7.4, k % 4 ? 1869 : 1873, 889.5 + k * 7.4, '#909090');
}
out.push('</g>');

// left scale
['5,410', '5,386', '5,363', '5,340', '5,317', '5,294', '5,271', '5,248', '5,225', '5,202', '5,179', '5,156', '5,133', '5,110'].forEach(function (s, i) {
  text(47, levels[i] + 1, s, '#505050', 'end');
});
[['1,750K', 910], ['1,500K', 930], ['1,250K', 950], ['1,000K', 970], ['50,000', 990], ['00,000', 1011], ['50,000', 1031]].forEach(function (l) {
  text(42, l[1], l[0], '#505050', 'end');
});

// right scale
for (k = 0; k < 12; k++) {
  if (85 - k * 5 !== 60 && 85 - k * 5 !== 45) text(1874, Math.round(109 + k * 65.7), (85 - k * 5) + ',00', '#505050');
}
[['1,000K', 922], ['750,000', 951], ['500,000', 981], ['250,000', 1010]].forEach(function (l) { text(1874, l[1], l[0], '#505050'); });

// time scale
['09:02', '09:03', '09:04', '09:05', '09:06', '09:07', '09:08', '', '09:10'].forEach(function (s, i) {
  text(i ? minutes[i - 1] + 1 : 50, 1051, s, '#505050');
});
text(1449, 1051, '9', '#505050');
text(1874, 1051, '09:10:5', '#505050');
rect(1312.5, 1038.5, 135, 17, '#ffe070', 'stroke="#000"');
text(1380, 1051, '2025/02/19(수) 09:08:45', '#505050', 'middle');

// price tags
rect(7, 443, 40, 12, '#fff');
rect(10, 429, 34, 13, UP);
text(43, 440, '5,280', '#fff', 'end');
text(41, 453, '.38%', UP, 'end');
rect(8.5, 608.5, 36, 28, '#ffe070', 'stroke="#000"');
text(42, 620, '5,192', '#505050', 'end');
text(43, 632, '19,36', RED, 'end');
rect(1871, 429, 40, 13, UP);
text(1874, 440, '5,280', '#fff');
text(1874, 453, '21,38%', UP);
rect(1870.5, 608.5, 41, 28, '#ffe070', 'stroke="#000"');
text(1876, 620, '5,192', '#505050');
text(1871, 632, '-19,36%', RED);
rect(1868, 78, 45, 24, '#fff');
text(1868, 88, 'LC:3,53', UP);
text(1867, 100, 'HC:-2,58', DOWN);

// annotations
text(1191, 158, '최고 5,420 (-2,58%, 09:08)', '#e80000');
text(98, 817, '최저 5,100 (3,53%, 09:02)', '#0000e0');
text(1862, 688, '당일시가 5,170 (18,85%)', '#00e800', 'end');
text(1861, 848, '1000: 5,628', '#000', 'end');
text(1861, 848, '180: 5,436', '#000', 'end');
text(1861, 860, '155: 5,268', '#ffc000', 'end');
text(1861, 860, '5: 5,263', RED, 'end');
text(1861, 872, '30: 5,261', '#b8e0ff', 'end');
text(1861, 872, '10: 5,261', BLUE, 'end');
text(1861, 930, '거래량: 1,638', '#339999', 'end');
text(1861, 930, 'Signal 60: 1,639,839', '#993300', 'end');
text(1861, 942, '500: 1,594', '#ffff00', 'end');
text(1861, 942, 'Signal 100: 1,590,440', '#ff9900', 'end');
text(1861, 954, 'Signal 150: 1,110,420', '#00e8f8', 'end');
text(1861, 954, '54: 41,420', '#000', 'end');
text(1861, 966, 'OBV: 1,588,795', '#ff9900', 'end');
text(1861, 966, 'KVO: -884,295', '#008c32', 'end');
text(1861, 978, 'KVO Signal 12: -899,202', '#b8f4ff', 'end');
text(1861, 978, 'Signal 24: 1,199,702', BLUE, 'end');

// legend
rect(52.5, 82.5, 4, 6, '#b8b8b8', 'stroke="#808080"');
rect(59.5, 78.5, 146, 14, '#eeeeee', 'stroke="#b8b8b8"');
text(63, 90, 'LS네트웍스 매물대 수(13)', '#404040');
rect(12.5, 96.5, 13, 13, '#fff', 'stroke="#000"');
out.push('<path d="M14.5 98.5h9v9h-9zM14.5 101.5h9M14.5 104.5h9M17.5 98v9M20.5 98v9" stroke="#707070" fill="none"/>');
rect(1903, 884, 8, 7, '#404040');
out.push('<path d="M1905 886l4 3M1909 886l-4 3" stroke="#fff"/>');

svg.innerHTML = out.join('');
```
